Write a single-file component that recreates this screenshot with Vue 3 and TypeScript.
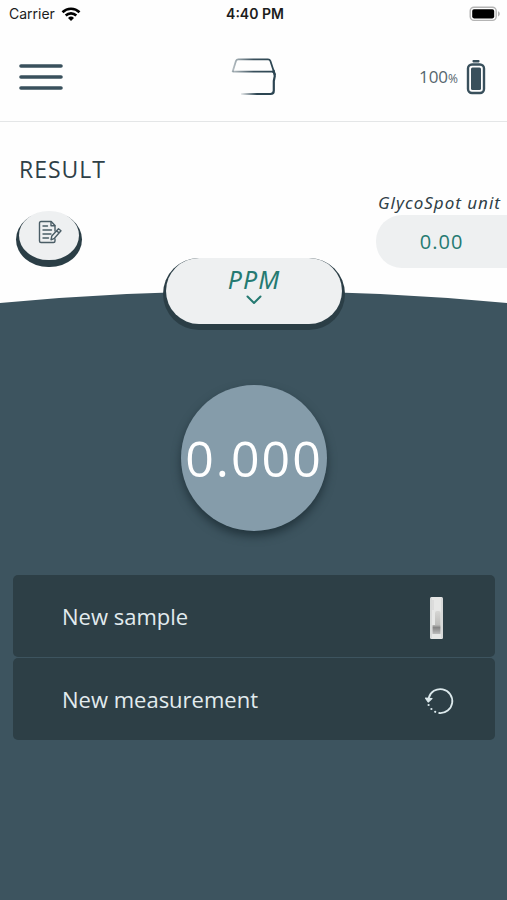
<script setup lang="ts">
import { ref } from 'vue'

interface Action {
  id: 'sample' | 'measurement'
  label: string
}

const batteryLevel = ref<number>(100)
const unit = ref<string>('PPM')
const unitValue = ref<string>('0.00')
const reading = ref<string>('0.000')

const actions: Action[] = [
  { id: 'sample', label: 'New sample' },
  { id: 'measurement', label: 'New measurement' },
]
</script>

<template>
  <div class="screen">
    <div class="status">
      <div class="carrier">
        <span>Carrier</span>
        <svg width="20" height="14" viewBox="0 0 20 14" fill="none" stroke="#000" stroke-width="2.6" aria-hidden="true">
          <path d="M1.500 5.200a12.200 12.200 0 0 1 17 0" />
          <path d="M4.700 8.500a7.600 7.600 0 0 1 10.600 0" />
          <path d="M7 10.900a4.300 4.300 0 0 1 6 0L10 14z" fill="#000" stroke="none" />
        </svg>
      </div>
      <strong class="clock">4:40 PM</strong>
      <svg class="phone-battery" width="32" height="16" viewBox="0 0 32 16" aria-hidden="true">
        <rect x="1.2" y="1.2" width="26" height="13.2" rx="3.8" fill="#fff" stroke="#b4b4b4" stroke-width="1.4" />
        <rect x="3.2" y="3.2" width="22" height="9.2" rx="1.8" fill="#000" />
        <path d="M29 5.2c2.4 1 2.4 4.2 0 5.2z" fill="#b4b4b4" />
      </svg>
    </div>

    <header class="header">
      <button class="menu" type="button" aria-label="Menu">
        <svg width="44" height="28" viewBox="0 0 44 28" stroke="#39505c" stroke-width="3.6" stroke-linecap="round">
          <path d="M2 3h40M2 14h40M2 25h40" />
        </svg>
      </button>
      <svg class="logo" width="46" height="40" viewBox="0 0 46 40" fill="none" stroke-linejoin="round" aria-hidden="true">
        <defs>
          <linearGradient id="fade" gradientUnits="userSpaceOnUse" x1="1" y1="0" x2="44" y2="0">
            <stop offset="0" stop-color="#39505c" stop-opacity="0.35" />
            <stop offset="0.5" stop-color="#39505c" />
            <stop offset="1" stop-color="#2c4552" />
          </linearGradient>
          <linearGradient id="fade-base" gradientUnits="userSpaceOnUse" x1="10" y1="0" x2="26" y2="0">
            <stop offset="0" stop-color="#39505c" stop-opacity="0.1" />
            <stop offset="1" stop-color="#2c4552" />
          </linearGradient>
        </defs>
        <g transform="translate(1 0)">
          <path d="M1.5 15 5 3.800Q5.600 2.400 7.200 2.400H37Q38.800 2.400 39.400 4L43 15" stroke="url(#fade)" stroke-width="1.8" />
          <path d="M1.500 14.600H41Q43.800 15 44 18" stroke="url(#fade)" stroke-width="1.8" />
          <path d="M10 37H39.500Q42.800 37 42.800 33.500V24L43.800 19 42.500 13" stroke="url(#fade-base)" stroke-width="2.200" />
        </g>
      </svg>
      <div class="charge">
        <span class="charge-text">{{ batteryLevel }}<small>%</small></span>
        <svg width="20" height="36" viewBox="0 0 20 36" fill="none" aria-hidden="true">
          <rect x="6.500" y="1" width="7" height="2.400" rx="0.800" fill="#39505c" />
          <rect x="2" y="5.500" width="16" height="28.500" rx="4" stroke="#39505c" stroke-width="2.400" />
          <rect x="5" y="8.500" width="10" height="22.500" rx="1.500" fill="#39505c" />
        </svg>
      </div>
    </header>

    <section class="summary">
      <h1 class="title">RESULT</h1>
      <div class="summary-row">
        <button class="note" type="button" aria-label="Add note">
          <svg width="24" height="24" viewBox="0 0 24 24" fill="none" stroke="#4a5d66" stroke-width="1.400" stroke-linejoin="round" stroke-linecap="round">
            <path d="M17 11V5.500L13.200 1.500H3Q1.500 1.500 1.500 3V21Q1.500 22.500 3 22.500H15.500Q17 22.500 17 21V19" />
            <path d="M13 1.800V5.800H16.800M5 6H9.500M5 10H13.500M5 14H13M5 18H10.500" />
            <path d="M13 19.800 13.800 16 20.500 8.800 23 10.800 16.400 18.300zM18.600 10.800 21 12.900" />
          </svg>
        </button>
        <div class="spot">
          <span class="spot-label">GlycoSpot unit</span>
          <output class="spot-value">{{ unitValue }}</output>
        </div>
      </div>
    </section>

    <main class="panel">
      <svg class="curve" viewBox="0 0 100 12" preserveAspectRatio="none" aria-hidden="true">
        <path d="M0 12Q50 -12 100 12z" fill="#3d545f" />
      </svg>
      <div class="body">
        <button class="unit" type="button">
          <span>{{ unit }}</span>
          <svg width="16" height="10" viewBox="0 0 16 10" fill="none" stroke="#257a72" stroke-width="2" stroke-linecap="round" stroke-linejoin="round" aria-hidden="true">
            <path d="M1.500 1.500 8 8 14.500 1.500" />
          </svg>
        </button>
        <output class="reading">{{ reading }}</output>
        <div class="actions">
          <button v-for="action in actions" :key="action.id" class="action" type="button">
            <span>{{ action.label }}</span>
            <svg v-if="action.id === 'sample'" width="30" height="46" viewBox="0 0 30 46" aria-hidden="true">
              <defs>
                <linearGradient id="window" x1="0" y1="0" x2="0" y2="1">
                  <stop offset="0" stop-color="#d6d6d4" />
                  <stop offset="0.600" stop-color="#bcbcba" />
                  <stop offset="0.720" stop-color="#858585" />
                  <stop offset="1" stop-color="#bdbdbd" />
                </linearGradient>
              </defs>
              <g transform="translate(0 3)">
                <rect x="5" y="1" width="13" height="42" rx="1.500" fill="#e6e7e6" />
                <path d="M6 2V42M17 2V42" stroke="#c9cccc" stroke-width="1" />
                <path d="M8 4V14" stroke="#d2d2d2" stroke-width="1" />
                <path d="M7.500 29H10V17Q10 15 12 15H14Q15.500 15 15.500 17V38H7.500z" fill="url(#window)" />
              </g>
            </svg>
            <svg v-else width="30" height="34" viewBox="0 0 30 34" fill="none" stroke="#dce9ec" aria-hidden="true">
              <g transform="translate(-1 4)">
                <path d="M4.700 12A12 12 0 1 1 15.200 27" stroke-width="1.800" stroke-linecap="round" />
                <path d="M1.500 12.200 4.200 16 8 12.600z" fill="#dce9ec" stroke-width="1.200" stroke-linejoin="round" />
                <g fill="#dce9ec" stroke="none">
                  <circle cx="4.600" cy="19" r="1.100" />
                  <circle cx="7.400" cy="23" r="1.100" />
                  <circle cx="11.200" cy="25.800" r="1.100" />
                </g>
              </g>
            </svg>
          </button>
        </div>
      </div>
    </main>
  </div>
</template>

<style>
body {
  margin: 0;
  background: #3d545f;
}
</style>

<style scoped>
.screen {
  display: flex;
  flex-direction: column;
  min-height: 100vh;
  background: #fefefe;
  color: #2f4047;
  font-family: "Open Sans", "Noto Sans", sans-serif;
}

button {
  border: 0;
  padding: 0;
  font: inherit;
  cursor: pointer;
}

svg {
  display: block;
}

.status {
  display: grid;
  grid-template-columns: 1fr auto 1fr;
  align-items: center;
  height: 28px;
  padding: 0 6px 0 9px;
  font: 14px/28px Inter, sans-serif;
  color: #1c1c1c;
}

.carrier {
  display: flex;
  align-items: center;
  gap: 6px;
}

.clock {
  font-weight: 600;
}

.phone-battery {
  justify-self: end;
}

.header {
  display: grid;
  grid-template-columns: 1fr auto 1fr;
  align-items: center;
  height: 94px;
  padding: 4px 21px 0 19px;
  border-bottom: 1px solid #e4e6e7;
  box-sizing: border-box;
}

.menu {
  justify-self: start;
  background: none;
}

.charge {
  display: flex;
  align-items: center;
  justify-self: end;
  gap: 8px;
}

.charge-text {
  font-size: 17px;
  color: #56666e;
}

.charge-text small {
  font-size: 12px;
}

.title {
  margin: 0;
  padding: 31px 19px 0;
  font-size: 23px;
  line-height: 32px;
  font-weight: 400;
  letter-spacing: 1px;
}

.summary-row {
  display: flex;
  justify-content: space-between;
  align-items: flex-start;
  padding-left: 19px;
}

.note {
  display: flex;
  justify-content: center;
  width: 60px;
  height: 49px;
  margin-top: 26px;
  padding: 9px 0 0 2px;
  box-sizing: border-box;
  border-radius: 30px / 25px;
  background: #eef0f1;
  box-shadow: 0 4px 0 3px #2b3e46;
}

.spot {
  display: flex;
  flex-direction: column;
  padding-top: 6px;
}

.spot-label {
  padding: 0 6px 0 2px;
  font-family: "Noto Sans", sans-serif;
  font-size: 17px;
  line-height: 24px;
  font-style: italic;
  letter-spacing: 1px;
}

.spot-value {
  border-radius: 26px 0 0 26px;
  background: #eef0f1;
  color: #257a72;
  font-size: 20px;
  line-height: 53px;
  letter-spacing: 1px;
  text-align: center;
}

.panel {
  display: flex;
  flex: 1;
  flex-direction: column;
  margin-top: 23px;
}

.curve {
  width: 100%;
  height: 12px;
}

.body {
  display: flex;
  flex: 1;
  flex-direction: column;
  align-items: center;
  padding: 0 12px 40px 13px;
  background: #3d545f;
}

.unit {
  display: flex;
  flex-direction: column;
  align-items: center;
  width: 176px;
  height: 66px;
  margin-top: -45px;
  padding-top: 5px;
  box-sizing: border-box;
  border-radius: 33px;
  background: #eef0f1;
  box-shadow: 0 3px 0 3px #2b3e46;
  color: #257a72;
  font-family: "Noto Sans", sans-serif;
  font-size: 25px;
  line-height: 32px;
  font-style: italic;
  letter-spacing: 1px;
}

.reading {
  width: 146px;
  margin-top: 61px;
  border-radius: 50%;
  background: #859caa;
  box-shadow: 0 5px 10px #22343c;
  color: #fff;
  font-size: 50px;
  line-height: 146px;
  letter-spacing: 2px;
  text-align: center;
}

.actions {
  display: grid;
  gap: 1px;
  width: 100%;
  margin-top: 44px;
}

.action {
  display: flex;
  align-items: center;
  justify-content: space-between;
  height: 82px;
  padding: 0 40px 0 49px;
  border-radius: 5px;
  background: #2d3f46;
  color: #e2ebee;
  font-size: 22px;
}
</style>
